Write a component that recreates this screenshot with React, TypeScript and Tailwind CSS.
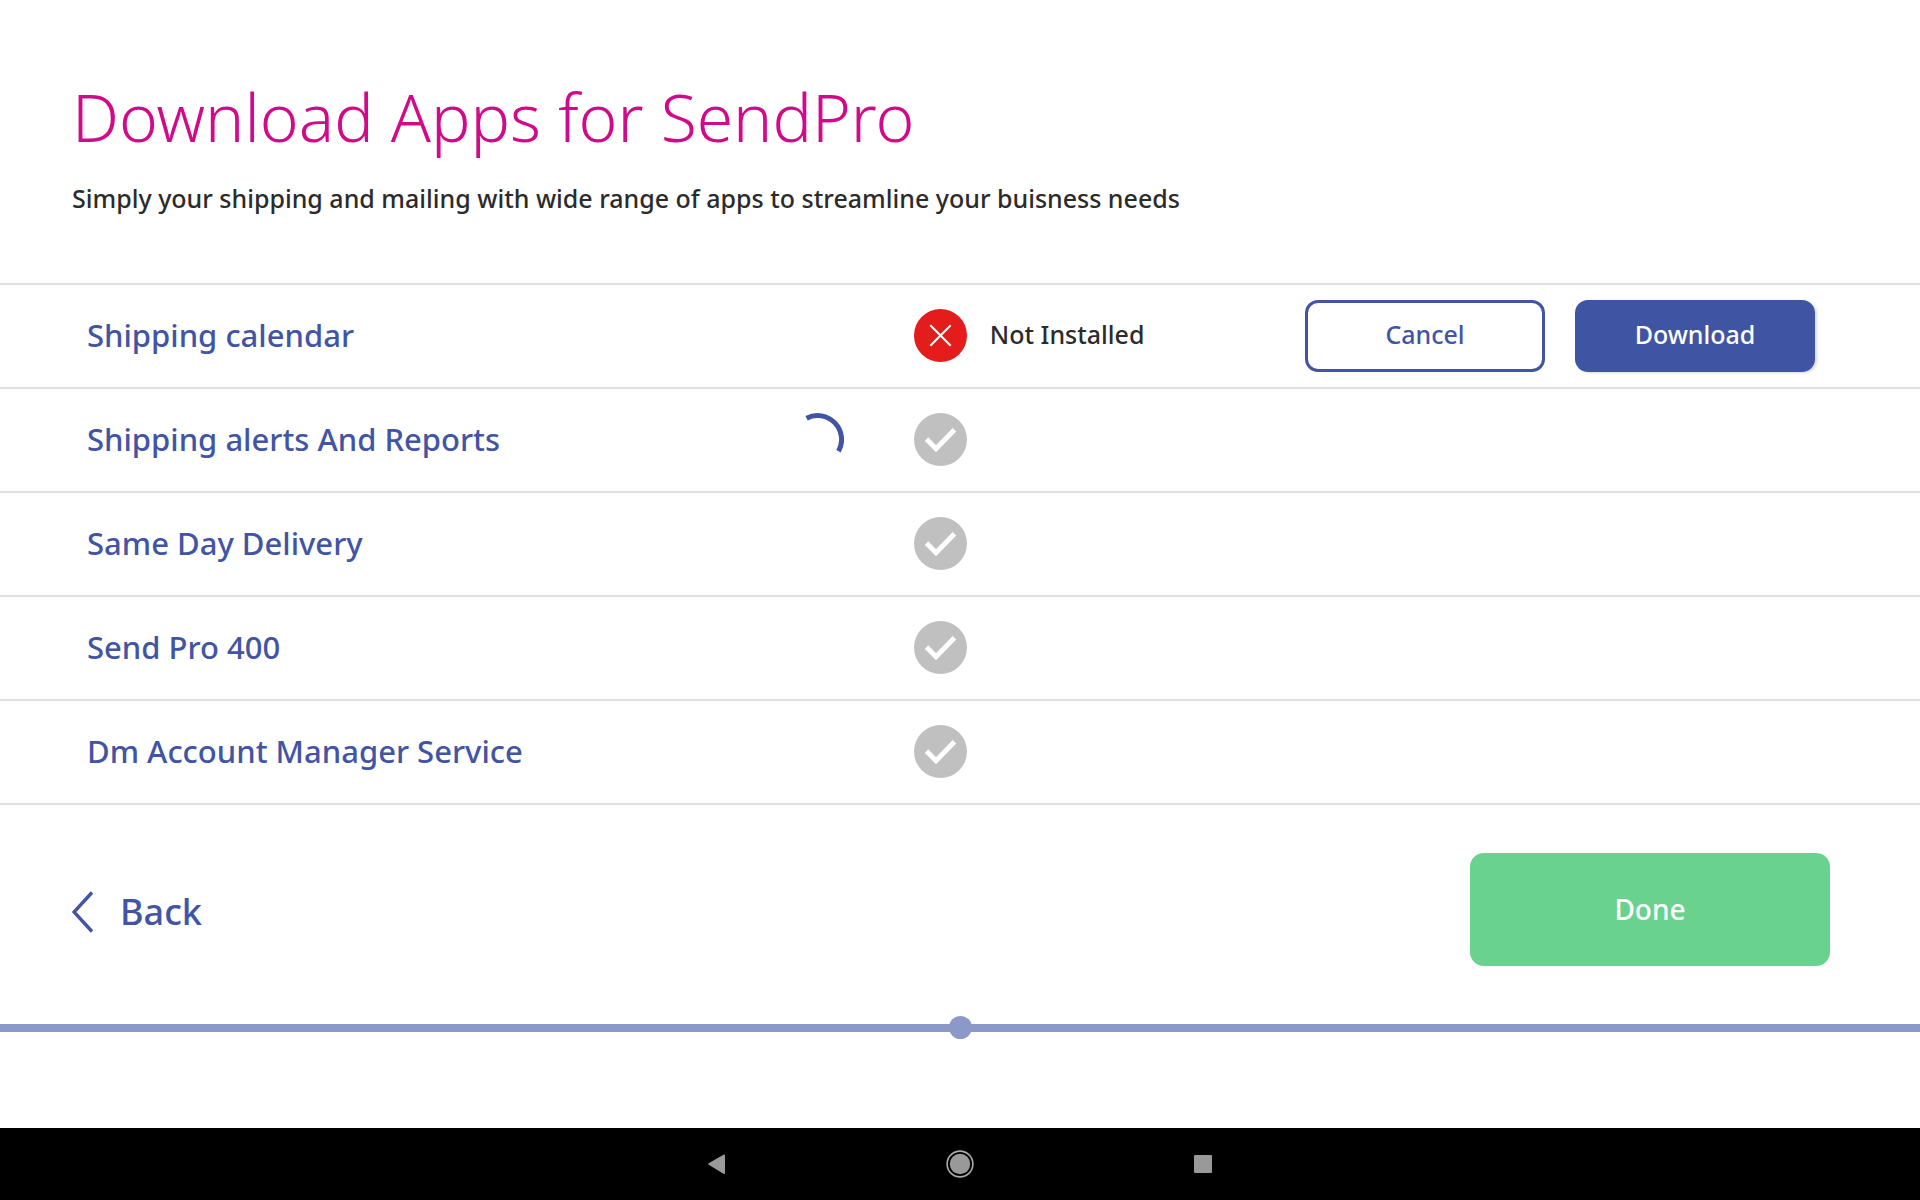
type AppStatus = "missing" | "pending";

type AppItem = {
  name: string;
  status: AppStatus;
  loading?: boolean;
};

const apps: AppItem[] = [
  { name: "Shipping calendar", status: "missing" },
  { name: "Shipping alerts And Reports", status: "pending", loading: true },
  { name: "Same Day Delivery", status: "pending" },
  { name: "Send Pro 400", status: "pending" },
  { name: "Dm Account Manager Service", status: "pending" },
];

function Spinner() {
  return (
    <svg className="h-[53px] w-[53px]" viewBox="0 0 53 53" fill="none" aria-label="Loading">
      <path d="M15.6 5.2A24 24 0 0 1 47.5 38.3" stroke="#4254a4" strokeWidth="5" />
    </svg>
  );
}

function StatusIcon({ status }: { status: AppStatus }) {
  if (status === "missing") {
    return (
      <svg className="h-[53px] w-[53px]" viewBox="0 0 53 53" fill="none" aria-hidden="true">
        <circle cx="26.5" cy="26.5" r="26.5" fill="#e41c1c" />
        <path d="M16.3 16.3 36.7 36.7M36.7 16.3 16.3 36.7" stroke="#fff" strokeWidth="2" />
      </svg>
    );
  }
  return (
    <svg className="h-[53px] w-[53px]" viewBox="0 0 53 53" fill="none" aria-hidden="true">
      <circle cx="26.5" cy="26.5" r="26.5" fill="#c0c0c0" />
      <path d="M12.5 26 22 35.7 40.5 16.8" stroke="#fff" strokeWidth="5" />
    </svg>
  );
}

function AppRow({ app }: { app: AppItem }) {
  return (
    <li className="flex h-[104px] items-center border-b-2 border-[#e0e0e0]">
      <div className="flex w-[44%] items-center justify-between pr-px pb-0.5 pl-[87px]">
        <span className="text-[31px] leading-11 font-medium text-[#4254a4]">{app.name}</span>
        {app.loading && <Spinner />}
      </div>
      <div className="ml-[69px] flex items-center gap-[23px] pb-0.5">
        <StatusIcon status={app.status} />
        {app.status === "missing" && <span className="text-[25px] font-medium text-[#2b2b2b]">Not Installed</span>}
      </div>
      {app.status === "missing" && (
        <div className="mr-[105px] ml-auto flex gap-[30px]">
          <button className="h-[72px] w-[240px] rounded-[13px] border-3 border-[#4254a4] bg-white pb-0.5 text-[25px] font-medium text-[#4254a4]">
            Cancel
          </button>
          <button className="h-[72px] w-[240px] rounded-[13px] bg-[#4054a4] pb-0.5 text-[25px] font-medium text-white shadow-[2px_1px_3px_rgba(0,0,0,0.15)]">
            Download
          </button>
        </div>
      )}
    </li>
  );
}

export default function App() {
  return (
    <div className="flex min-h-screen flex-col bg-white font-['Noto_Sans','Open_Sans',sans-serif]">
      <header className="flex h-[283px] flex-col px-[72px] pt-[68px]">
        <h1 className="text-[66px] leading-24 font-[350] text-[#d10a8a]">Download Apps for SendPro</h1>
        <p className="mt-4 text-[25px] leading-9 font-medium text-[#2b2b2b]">
          Simply your shipping and mailing with wide range of apps to streamline your buisness needs
        </p>
      </header>

      <ul className="border-t-2 border-[#e0e0e0]">
        {apps.map((app) => (
          <AppRow key={app.name} app={app} />
        ))}
      </ul>

      <div className="flex items-center justify-between pt-12 pr-[90px] pb-[50px] pl-[72px]">
        <button className="flex items-center gap-[27px] pt-1 text-[36px] font-medium text-[#4254a4]">
          <svg className="h-[42px] w-[21px]" viewBox="0 0 21 42" fill="none" aria-hidden="true">
            <path d="M20 1.5 2 21 20 40.5" stroke="#4254a4" strokeWidth="3.4" />
          </svg>
          Back
        </button>
        <button className="h-[113px] w-[360px] rounded-[14px] bg-[#69d28e] pb-0.5 text-[28px] font-medium text-white">
          Done
        </button>
      </div>

      {/* Setup progress */}
      <div className="flex items-center">
        <div className="h-2 flex-1 bg-[#8c98c8]" />
        <div className="-mx-px h-[23px] w-[23px] rounded-full bg-[#8c98c8]" />
        <div className="h-2 flex-1 bg-[#8c98c8]" />
      </div>

      {/* System navigation */}
      <nav className="mt-auto flex h-[72px] items-center justify-center gap-[215px] bg-black">
        <button aria-label="Back">
          <svg className="h-7 w-7" viewBox="0 0 28 28" aria-hidden="true">
            <path d="M22 5.5v17.4a1 1 0 0 1-1.5.8L5.6 14.8a1 1 0 0 1 0-1.6L20.5 4.7A1 1 0 0 1 22 5.5Z" fill="#999" />
          </svg>
        </button>
        <button aria-label="Home">
          <svg className="h-7 w-7" viewBox="0 0 28 28" fill="none" aria-hidden="true">
            <circle cx="14" cy="14" r="12.9" stroke="#aaa" strokeWidth="1.6" />
            <circle cx="14" cy="14" r="10.2" fill="#999" />
          </svg>
        </button>
        <button aria-label="Recent apps">
          <svg className="h-7 w-7" viewBox="0 0 28 28" aria-hidden="true">
            <rect x="5" y="5" width="18" height="18" rx="1" fill="#999" />
          </svg>
        </button>
      </nav>
    </div>
  );
}
